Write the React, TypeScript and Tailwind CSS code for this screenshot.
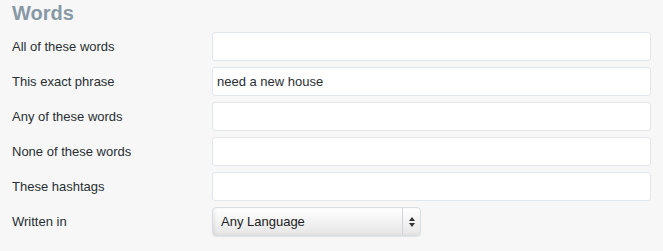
import React from 'react';

const rows: { label: string; value: string }[] = [
  { label: 'All of these words', value: '' },
  { label: 'This exact phrase', value: 'need a new house' },
  { label: 'Any of these words', value: '' },
  { label: 'None of these words', value: '' },
  { label: 'These hashtags', value: '' },
];

export default function App() {
  return (
    <div className="w-[663px] h-[251px] bg-[#f7f7f7] px-3 font-['Liberation_Sans',Arial,sans-serif] text-[13px] text-[#292f33]">
      <h2 className="pt-px h-[32px] text-[20px] leading-[24px] font-bold text-[#8899a6]">Words</h2>
      {rows.map((r) => (
        <div key={r.label} className="flex items-center h-[29px] mb-[6px]">
          <label className="w-[200px] shrink-0">{r.label}</label>
          <input
            type="text"
            defaultValue={r.value}
            className="w-[440px] h-[29px] bg-white border border-[#e1e8ed] rounded-[3px] px-[4px] text-[13px] text-[#292f33] outline-none"
          />
        </div>
      ))}
      <div className="flex items-center h-[29px]">
        <label className="w-[200px] shrink-0">Written in</label>
        <div className="relative flex items-center w-[209px] h-[29px] rounded-[4px] border border-[#d8dde1] bg-gradient-to-b from-white to-[#e6e6e6] shadow-[inset_2px_0_3px_rgba(0,0,0,0.06),0_1px_1px_rgba(0,0,0,0.08)]">
          <span className="flex-1 pl-2 text-[#222]">Any Language</span>
          <div className="w-[18px] h-full border-l border-[#d0d4d8] flex flex-col items-center justify-center gap-[2px]">
            <svg width="6" height="4" viewBox="0 0 6 4"><path d="M0 4 L3 0 L6 4 Z" fill="#333" /></svg>
            <svg width="6" height="4" viewBox="0 0 6 4"><path d="M0 0 L3 4 L6 0 Z" fill="#333" /></svg>
          </div>
        </div>
      </div>
    </div>
  );
}
